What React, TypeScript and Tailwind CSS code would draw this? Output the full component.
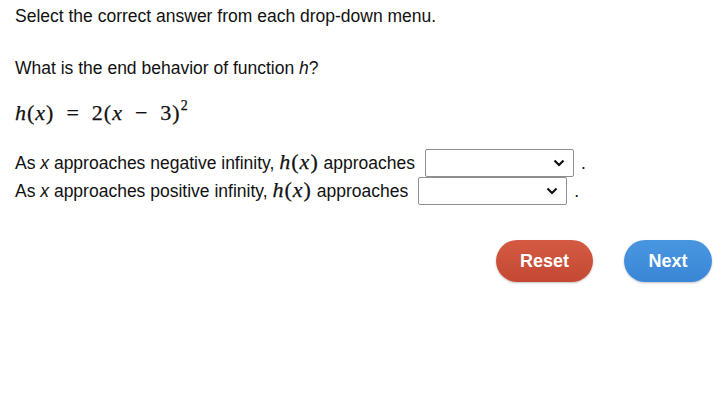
import React from "react";

const M: React.FC<{ children: React.ReactNode; className?: string }> = ({ children, className }) => (
  <span className={"font-['Liberation_Serif',serif] [-webkit-text-stroke:0.25px_#111] tracking-[1px] " + (className ?? "")}>{children}</span>
);

const Chevron = () => (
  <svg width="12" height="8" viewBox="0 0 12 8" className="absolute right-[8px] top-1/2 -translate-y-1/2">
    <path d="M1.5 1.5 L6 6 L10.5 1.5" fill="none" stroke="#111" strokeWidth="2.2" />
  </svg>
);

const Hx = () => (
  <M className="text-[22px] leading-none">
    <i>h</i>(<i>x</i>)
  </M>
);

const Dropdown = () => (
  <span className="ml-[10px] relative inline-block w-[149px] h-[28px] border border-[#8f8f8f] rounded-[2px] bg-white">
    <Chevron />
  </span>
);

export default function App() {
  return (
    <div className="w-[727px] h-[410px] bg-white text-[#111] font-['Liberation_Sans',Arial,sans-serif] text-[17.5px]">
      <div className="pl-[15px] pt-[5px]">
        <p className="leading-[22px]">Select the correct answer from each drop-down menu.</p>
        <p className="leading-[22px] mt-[30px]">
          What is the end behavior of function <i>h</i>?
        </p>
        <div className="mt-[19px] h-[28px] flex items-center text-[22px]">
          <M>
            <i>h</i>(<i>x</i>)
          </M>
          <M className="ml-[12px]">=</M>
          <M className="ml-[12px]">
            2(<i>x</i>
          </M>
          <M className="ml-[12px]">−</M>
          <M className="ml-[12px]">
            3)<span className="text-[14px] relative -top-[10px]">2</span>
          </M>
        </div>
        <div className="mt-[23px] flex flex-col">
          <div className="h-[28px] flex items-center">
            <span>
              As <i>x</i> approaches negative infinity, <Hx /> approaches
            </span>
            <Dropdown />
            <span className="ml-[7px]">.</span>
          </div>
          <div className="h-[28px] flex items-center">
            <span>
              As <i>x</i> approaches positive infinity, <Hx /> approaches
            </span>
            <Dropdown />
            <span className="ml-[7px]">.</span>
          </div>
        </div>
      </div>
      <div className="flex justify-end pr-[15px] mt-[35px] gap-[31px]">
        <button className="w-[97px] h-[42px] rounded-full bg-gradient-to-b from-[#d45a43] to-[#c44833] text-white font-bold text-[18px] shadow-[0_1px_2px_rgba(0,0,0,0.25)]">
          Reset
        </button>
        <button className="w-[88px] h-[42px] rounded-full bg-gradient-to-b from-[#4896e0] to-[#3a86d6] text-white font-bold text-[18px] shadow-[0_1px_2px_rgba(0,0,0,0.25)]">
          Next
        </button>
      </div>
    </div>
  );
}
